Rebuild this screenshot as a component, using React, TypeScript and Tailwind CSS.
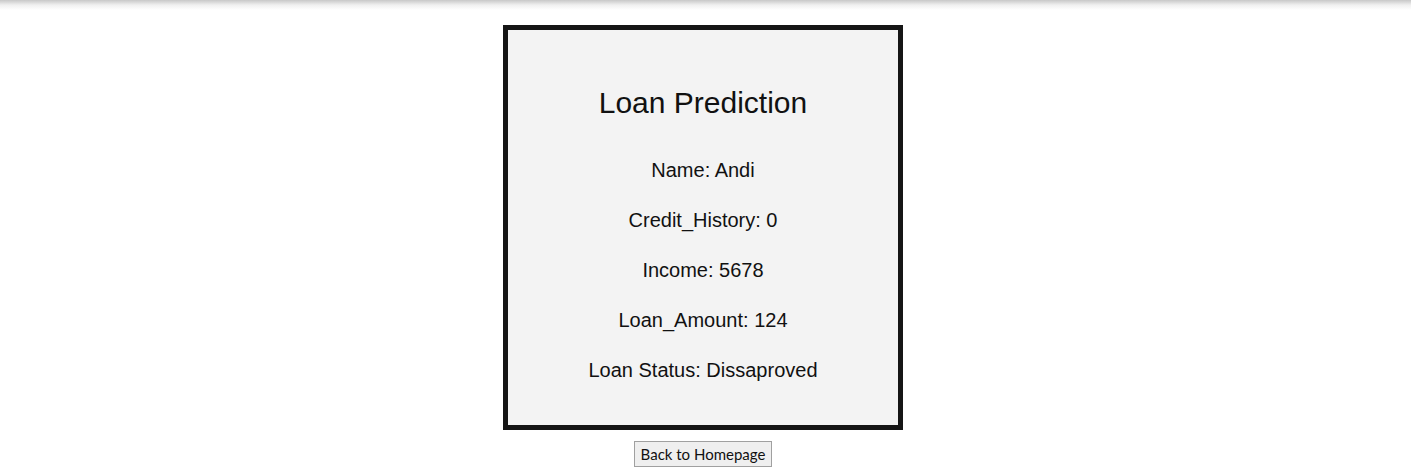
export default function App() {
  const rows = [
    'Name: Andi',
    'Credit_History: 0',
    'Income: 5678',
    'Loan_Amount: 124',
    'Loan Status: Dissaproved',
  ];

  return (
    <div className="relative min-h-[473px] bg-white text-[#111]">
      {/* top edge shadow */}
      <div className="absolute inset-x-0 top-0 h-[10px] bg-gradient-to-b from-[#c8c8c8] via-[#f0f0f0] to-white" />

      <div className="flex flex-col items-center pt-[25px] pr-[5px]">
        <div className="w-[400px] h-[405px] border-[5px] border-[#151515] bg-[#f3f3f3] flex flex-col items-center pt-[56px] font-['Liberation_Sans']">
          <h1 className="text-[30px] leading-[34px] font-['Liberation_Sans']">Loan Prediction</h1>
          <div className="mt-[25px] flex flex-col items-center">
            {rows.map((r) => (
              <p key={r} className="h-[50px] flex items-center text-[20px] font-['Liberation_Sans']">
                {r}
              </p>
            ))}
          </div>
        </div>

        <button className="mt-[11px] h-[26px] px-[6px] border border-[#a0a0a0] bg-[#efefef] font-['Lato'] text-[15px] text-[#111]">
          Back to Homepage
        </button>
      </div>
    </div>
  );
}
